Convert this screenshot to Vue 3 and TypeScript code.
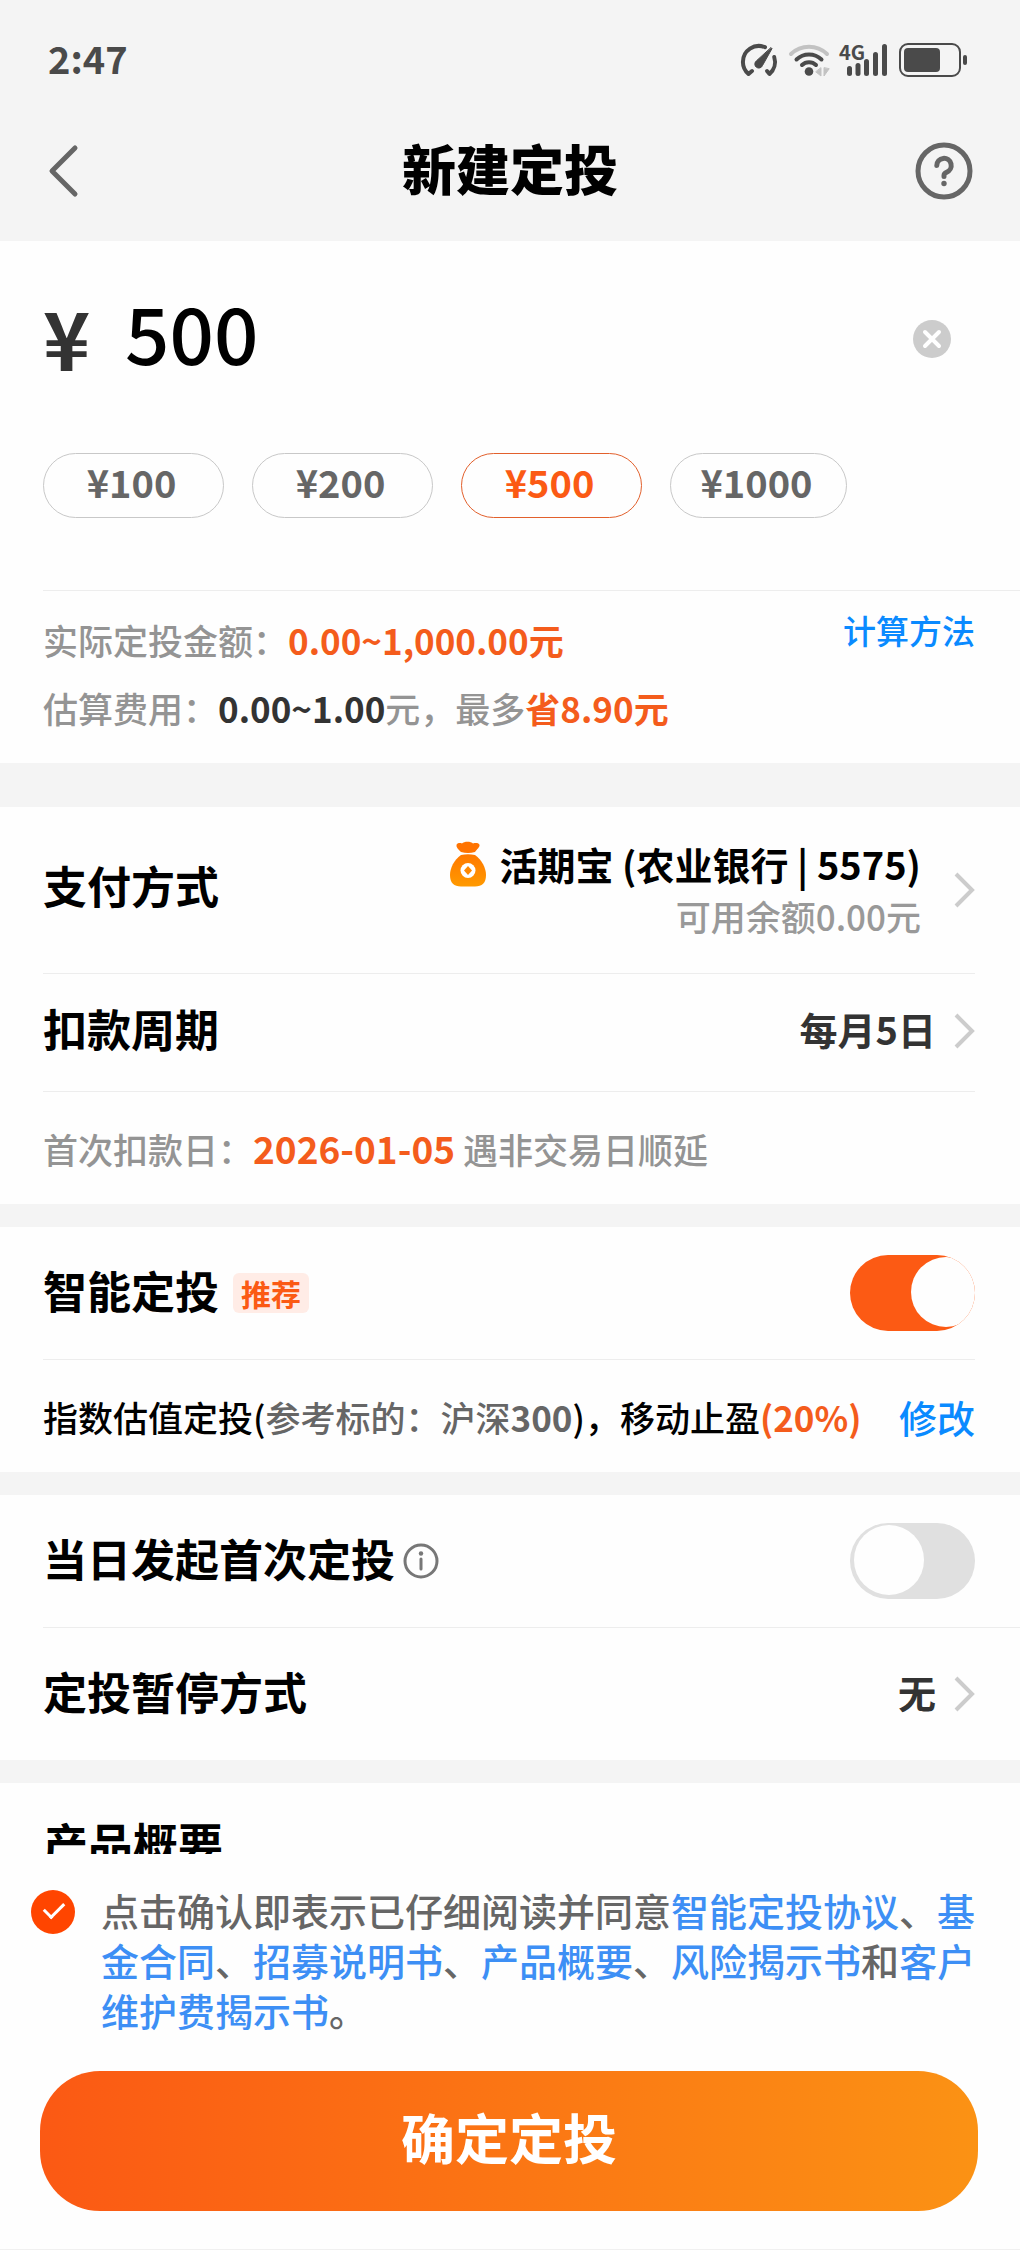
<script setup lang="ts">
import { ref } from 'vue'

interface Preset {
  value: string
  wide: boolean
}

const presets: Preset[] = [
  { value: '100', wide: false },
  { value: '200', wide: false },
  { value: '500', wide: false },
  { value: '1000', wide: true },
]

const amount = ref('500')
const smartPlan = ref(true)
const startToday = ref(false)
const agreed = ref(true)
</script>

<template>
  <div class="page">
    <header class="header">
      <div class="status">
        <span class="time">2:47</span>
        <div class="status-icons">
          <svg width="40" height="36" viewBox="738 41 40 36" fill="none" stroke="#4a4a4a" stroke-width="4" stroke-linecap="round" stroke-linejoin="round">
            <path d="M751 70 L747.500 73 A16 16 0 0 1 741.900 61 A16 16 0 0 1 764 46.200" />
            <path d="M773.200 56 A16 16 0 0 1 768.500 73 L766 70" />
            <path d="M770.200 46.800 L771 47.600 L761.500 64.500 A4 4 0 1 1 755.200 60 Z" fill="#4a4a4a" stroke-width="1" />
          </svg>
          <svg width="42" height="36" viewBox="787 41 42 36" fill="none" stroke-linecap="round">
            <path d="M790 53 A26 26 0 0 1 826 53" stroke="#c2c2c2" stroke-width="4" />
            <path d="M795.500 58.500 A18 18 0 0 1 820.500 58.500" stroke="#4a4a4a" stroke-width="4" />
            <path d="M801 64 A10 10 0 0 1 815 64" stroke="#4a4a4a" stroke-width="4" />
            <circle cx="808" cy="70.500" r="4.300" fill="#4a4a4a" />
            <path d="M820 67 V75 L815 71 Z M823 67 V75 L828 68 Z" fill="#c2c2c2" stroke="#c2c2c2" stroke-width="1" />
          </svg>
          <svg class="signal" width="50" height="36" viewBox="839 41 50 36">
            <text x="839" y="59" class="net">4G</text>
            <g fill="#4a4a4a">
              <rect x="847" y="65" width="5" height="10" rx="2.500" />
              <rect x="855.500" y="62" width="5" height="13" rx="2.500" />
              <rect x="864" y="58" width="5" height="17" rx="2.500" />
              <rect x="873" y="51" width="5" height="24" rx="2.500" />
              <rect x="882" y="43" width="5" height="32" rx="2.500" />
            </g>
          </svg>
          <svg width="70" height="36" viewBox="898 41 70 36">
            <rect x="900" y="43" width="60" height="32" rx="8" fill="none" stroke="#4a4a4a" stroke-width="2" />
            <rect x="904" y="47" width="36" height="24" rx="4" fill="#4a4a4a" />
            <rect x="963" y="54" width="4" height="10" rx="2" fill="#4a4a4a" />
          </svg>
        </div>
      </div>
      <nav class="nav">
        <button class="icon-btn" type="button" aria-label="返回">
          <svg width="32" height="56" viewBox="0 0 32 56" fill="none" stroke="#666" stroke-width="5" stroke-linecap="round" stroke-linejoin="round">
            <path d="M28 5 L5 28 L28 51" />
          </svg>
        </button>
        <h1>新建定投</h1>
        <button class="icon-btn" type="button" aria-label="帮助">
          <svg width="58" height="58" viewBox="0 0 58 58" fill="none" stroke="#666" stroke-width="5" stroke-linecap="round">
            <circle cx="29" cy="29" r="26" />
            <path d="M21.800 23.500 A7.200 7.200 0 1 1 31.500 30.300 Q29 31.300 29 33.500 V34.500" />
            <circle cx="29" cy="41.500" r="2.700" fill="#666" stroke="none" />
          </svg>
        </button>
      </nav>
    </header>

    <main class="content">
      <section class="card">
        <div class="amount">
          <label class="yen" for="amount">¥</label>
          <input id="amount" v-model="amount" class="amount-input" type="text" inputmode="decimal" />
          <button class="icon-btn" type="button" aria-label="清除" @click="amount = ''">
            <svg width="38" height="38" viewBox="0 0 38 38">
              <circle cx="19" cy="19" r="19" fill="#ccc" />
              <path d="M12 12 L26 26 M26 12 L12 26" stroke="#fff" stroke-width="4" stroke-linecap="round" />
            </svg>
          </button>
        </div>
        <div class="chips">
          <button
            v-for="p in presets"
            :key="p.value"
            type="button"
            class="chip"
            :class="{ active: p.value === amount, wide: p.wide }"
            @click="amount = p.value"
          >¥{{ p.value }}</button>
        </div>
        <div class="fees line-top">
          <div class="fee-lines">
            <p>实际定投金额：<b class="orange">0.00~1,000.00元</b></p>
            <p>估算费用：<b class="dark">0.00~1.00</b>元，最多<b class="orange">省8.90元</b></p>
          </div>
          <a href="#" class="method">计算方法</a>
        </div>
      </section>

      <section class="card pay">
        <div class="row pay-row">
          <h2>支付方式</h2>
          <div class="pay-info">
            <div class="bank">
              <svg width="38" height="46" viewBox="0 0 38 46">
                <defs>
                  <linearGradient id="bag" x1="0" y1="0" x2="0" y2="1">
                    <stop offset="0" stop-color="#ff7800" />
                    <stop offset="1" stop-color="#ff9a00" />
                  </linearGradient>
                </defs>
                <path d="M12 11 C9 8 7 6 7.500 4 C8 2 11 1.500 13 2.500 C15 0 22 0 24 2.500 C27 1.500 30 2 30.500 4 C31 6 28 8 26 11 Q19 13 12 11 Z" fill="#ff7300" />
                <path d="M12 14 Q19 12.500 26 14 C33 19 37 27 37 34 C37 42 33 45.500 26 45.500 H12 C5 45.500 1 42 1 34 C1 27 5 19 12 14 Z" fill="url(#bag)" />
                <circle cx="19" cy="29.500" r="7.500" fill="#fff" />
                <path d="M19 25 L23 29.500 L19 34 L15 29.500 Z" fill="#ff8800" />
              </svg>
              <span>活期宝 (农业银行 | 5575)</span>
            </div>
            <div class="balance">可用余额0.00元</div>
          </div>
          <svg class="arrow" width="22" height="38" viewBox="0 0 22 38"><path d="M3 3 L19 19 L3 35" /></svg>
        </div>
        <div class="row period line-top">
          <h2>扣款周期</h2>
          <span class="value">每月5日</span>
          <svg class="arrow" width="22" height="38" viewBox="0 0 22 38"><path d="M3 3 L19 19 L3 35" /></svg>
        </div>
        <p class="row note line-top">首次扣款日：<b class="orange date">2026-01-05</b>&nbsp;遇非交易日顺延</p>
      </section>

      <section class="card">
        <div class="row switch-row">
          <h2><label for="smart">智能定投</label></h2>
          <span class="tag">推荐</span>
          <input id="smart" v-model="smartPlan" class="switch" type="checkbox" />
        </div>
        <div class="row note plan line-top">
          <p>指数估值定投(<span class="grey">参考标的：沪深<b>300</b></span>)，移动止盈<b class="orange">(20%)</b></p>
          <a href="#" class="edit">修改</a>
        </div>
      </section>

      <section class="card">
        <div class="row switch-row">
          <h2><label for="today">当日发起首次定投</label></h2>
          <svg class="info" width="36" height="36" viewBox="0 0 36 36">
            <circle cx="18" cy="18" r="16" fill="none" stroke="#777" stroke-width="3" />
            <path d="M18 16 V26" stroke="#777" stroke-width="3" stroke-linecap="round" />
            <circle cx="18" cy="10.500" r="2.200" fill="#777" />
          </svg>
          <input id="today" v-model="startToday" class="switch" type="checkbox" />
        </div>
        <div class="row pause line-top wide-line">
          <h2>定投暂停方式</h2>
          <span class="value">无</span>
          <svg class="arrow" width="22" height="38" viewBox="0 0 22 38"><path d="M3 3 L19 19 L3 35" /></svg>
        </div>
      </section>

      <section class="card product">
        <h2>产品概要</h2>
      </section>
    </main>

    <footer class="footer">
      <div class="agreement">
        <input id="agree" v-model="agreed" class="agree-box" type="checkbox" />
        <p><label for="agree">点击确认即表示已仔细阅读并同意</label><a href="#">智能定投协议</a>、<a href="#">基金合同</a>、<a href="#">招募说明书</a>、<a href="#">产品概要</a>、<a href="#">风险揭示书</a>和<a href="#">客户维护费揭示书</a>。</p>
      </div>
      <button class="submit" type="button">确定定投</button>
    </footer>
  </div>
</template>

<style>
body {
  margin: 0;
  background: #f4f4f4;
}
</style>

<style scoped>
.page {
  display: flex;
  flex-direction: column;
  height: 100vh;
  background: #f4f4f4;
  color: #000;
  font-family: "Noto Sans CJK SC", "Noto Sans", sans-serif;
  font-weight: 500;
  font-size: 35px;
}
h1,
h2,
p {
  margin: 0;
}
button,
input {
  margin: 0;
  padding: 0;
  border: 0;
  background: none;
  font-family: inherit;
}
a {
  text-decoration: none;
}
svg {
  display: block;
  flex: none;
}
.orange {
  color: #f45c1c;
}
.dark {
  color: #333;
}
.grey {
  color: #666;
}
.status {
  display: flex;
  align-items: center;
  justify-content: space-between;
  height: 80px;
  padding: 20px 52px 0 48px;
}
.time {
  padding-bottom: 4px;
  color: #4a4a4a;
  font-size: 38px;
  font-weight: 700;
  line-height: 56px;
}
.status-icons {
  display: flex;
  gap: 9px;
}
.signal {
  overflow: visible;
}
.net {
  fill: #4a4a4a;
  font-size: 20px;
  font-weight: 700;
}
.nav {
  display: flex;
  align-items: center;
  justify-content: space-between;
  height: 141px;
  padding: 0 47px;
}
.nav .icon-btn {
  display: flex;
  width: 58px;
}
h1 {
  padding-bottom: 6px;
  font-size: 54px;
  font-weight: 900;
  line-height: 72px;
}
.content {
  flex: 1;
  min-height: 0;
  overflow: hidden;
}
.card {
  margin-bottom: 23px;
  background: #fefefe;
}
.amount {
  display: flex;
  align-items: center;
  height: 196px;
  padding: 0 69px 0 43px;
}
.yen {
  width: 82px;
  padding-bottom: 6px;
  color: #333;
  font-size: 80px;
  font-weight: 700;
  line-height: 100px;
}
.amount-input {
  flex: 1;
  min-width: 0;
  height: 108px;
  margin-bottom: 16px;
  color: #000;
  font-size: 78px;
  font-weight: 500;
  outline: none;
}
.chips {
  display: flex;
  gap: 28px;
  padding: 16px 43px 72px;
}
.chip {
  box-sizing: border-box;
  width: 181px;
  height: 65px;
  padding: 0 4px 8px 0;
  border: 1px solid #c8c8c8;
  border-radius: 33px;
  color: #666;
  font-size: 38px;
  font-weight: 700;
  line-height: 54px;
}
.chip.wide {
  width: 177px;
}
.chip.active {
  border-color: #e2602c;
  color: #fb5a14;
}
.line-top {
  border-top: 1px solid #ededed;
}
.fees {
  display: flex;
  justify-content: space-between;
  margin-left: 43px;
  padding: 15px 45px 21px 0;
  color: #949494;
  line-height: 68px;
}
.method {
  color: #0a8aff;
  font-size: 33px;
  line-height: 48px;
}
.pay {
  margin-top: 44px;
}
.row {
  display: flex;
  align-items: center;
  margin: 0 45px 0 43px;
}
h2 {
  padding-bottom: 6px;
  font-size: 44px;
  font-weight: 700;
  line-height: 60px;
}
.pay-row {
  height: 166px;
}
.pay-row h2 {
  padding-bottom: 10px;
}
.pay-info {
  margin-left: auto;
  margin-right: 32px;
  text-align: right;
  line-height: 52px;
}
.bank {
  display: flex;
  align-items: center;
  gap: 12px;
  font-size: 38px;
  font-weight: 700;
}
.balance {
  color: #999;
}
.arrow {
  fill: none;
  stroke: #ccc;
  stroke-width: 4;
}
.period {
  height: 113px;
  padding-bottom: 4px;
}
.value {
  margin-left: auto;
  margin-right: 17px;
  padding-bottom: 4px;
  color: #333;
  font-size: 38px;
  font-weight: 700;
  line-height: 56px;
}
.note {
  height: 112px;
  color: #949494;
}
.date {
  font-size: 37px;
}
.switch-row {
  height: 132px;
}
.tag {
  margin-left: 14px;
  padding: 0 8px;
  border-radius: 6px;
  background: #ffece6;
  color: #fb5a14;
  font-size: 30px;
  font-weight: 700;
  line-height: 40px;
}
.switch {
  position: relative;
  width: 125px;
  height: 76px;
  margin-left: auto;
  border-radius: 38px;
  background: #e0e0e0;
  appearance: none;
  overflow: hidden;
}
.switch::before {
  content: "";
  position: absolute;
  top: 2px;
  left: 4px;
  width: 70px;
  height: 70px;
  border-radius: 50%;
  background: #fefefe;
}
.switch:checked {
  background: #fc5a14;
}
.switch:checked::before {
  left: 61px;
}
.plan {
  justify-content: space-between;
  color: #000;
}
.edit {
  color: #0a8aff;
  font-size: 38px;
}
.info {
  margin-left: 8px;
}
.pause {
  height: 132px;
}
.wide-line {
  margin-right: 0;
  padding-right: 45px;
}
.product {
  height: 400px;
  padding: 30px 43px 0;
}
.product h2 {
  font-size: 45px;
}
.footer {
  flex: none;
  padding: 31px 42px 38px 40px;
  border-bottom: 1px solid #f0f0f0;
  background: #fefefe;
}
.agreement {
  display: flex;
  align-items: flex-start;
  gap: 26px;
  margin: 0 0 36px -9px;
  color: #666;
  font-size: 38px;
  line-height: 50px;
}
.agreement p {
  flex: 1;
}
.agreement a {
  color: #3d8ff5;
}
.agree-box {
  position: relative;
  flex: none;
  width: 44px;
  height: 44px;
  margin-top: 5px;
  border-radius: 50%;
  background: #ddd;
  appearance: none;
}
.agree-box:checked {
  background: #ff4500;
}
.agree-box:checked::after {
  content: "";
  position: absolute;
  top: 12px;
  left: 13px;
  width: 17px;
  height: 9px;
  border: solid #fff;
  border-width: 0 0 3px 3px;
  transform: rotate(-45deg);
}
.submit {
  width: 100%;
  height: 140px;
  padding-bottom: 8px;
  border-radius: 60px;
  background: linear-gradient(90deg, #fb5914, #fb9214);
  color: #fff;
  font-size: 54px;
  font-weight: 700;
  line-height: 72px;
}
</style>
